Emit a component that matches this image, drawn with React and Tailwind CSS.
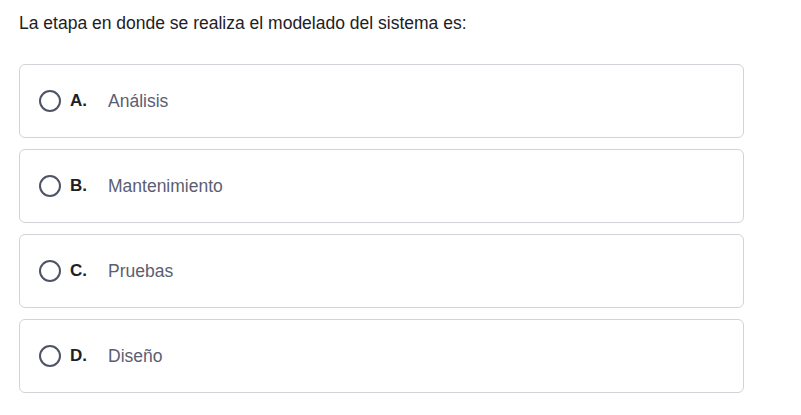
const options = [
  { key: 'A', label: 'Análisis' },
  { key: 'B', label: 'Mantenimiento' },
  { key: 'C', label: 'Pruebas' },
  { key: 'D', label: 'Diseño' },
]

export default function App() {
  return (
    <div className="min-h-screen bg-white pl-[19px] pr-[57px] pt-[12px] font-['Liberation_Sans',Arial,sans-serif]">
      <p className="text-[17.5px] leading-[22px] text-[#1d2125]">
        La etapa en donde se realiza el modelado del sistema es:
      </p>

      <div className="mt-[30px] flex flex-col gap-[11px]">
        {options.map(o => (
          <label
            key={o.key}
            className="flex h-[74px] items-center rounded-[6px] border border-[#d1d3d8] pl-[19px]"
          >
            <span className="h-[22px] w-[22px] shrink-0 rounded-full border-[2.5px] border-[#4f5366]" />
            <span className="ml-[9px] w-[38px] text-[17px] font-bold text-[#1d2125]">{o.key}.</span>
            <span className="text-[17.5px] text-[#5b5e73]">{o.label}</span>
          </label>
        ))}
      </div>
    </div>
  )
}
